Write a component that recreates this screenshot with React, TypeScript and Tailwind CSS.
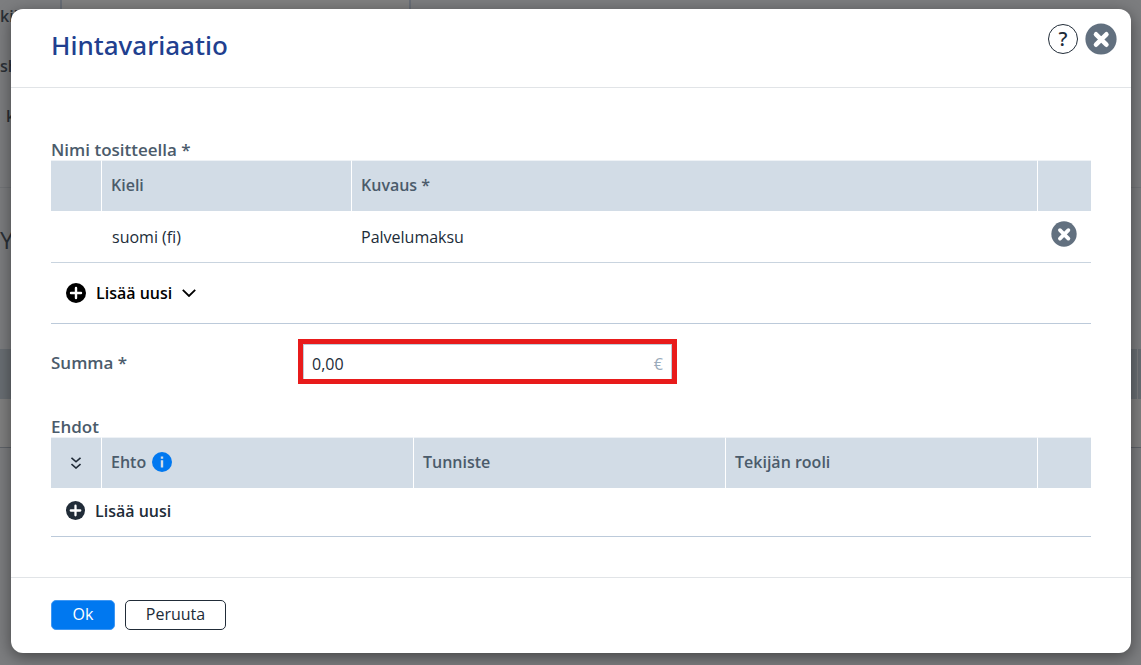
import React, { useState } from 'react';

const CloseIcon: React.FC<{ className?: string }> = ({ className }) => (
  <svg viewBox="0 0 32 32" className={className} aria-hidden="true">
    <circle cx="16" cy="16" r="15.6" fill="#62707f" />
    <path d="M11 11.3l10.4 10.4M21.4 11.3L11 21.7" stroke="#fff" strokeWidth="4.6" strokeLinecap="round" />
  </svg>
);

const PlusIcon: React.FC<{ className?: string }> = ({ className }) => (
  <svg viewBox="0 0 20 20" className={className} aria-hidden="true">
    <circle cx="10" cy="10" r="10" fill="currentColor" />
    <path d="M10 5v10M5 10h10" stroke="#fff" strokeWidth="2.4" strokeLinecap="round" />
  </svg>
);

const headCell = 'border-l border-t border-l-white border-t-[#eef2f6] pl-[9px] pb-[2px] text-left font-semibold';

const PageBehind: React.FC = () => (
  <div className="absolute inset-0 overflow-hidden bg-[#7c7d7f] font-semibold text-[#2b3036]" aria-hidden="true">
    <div className="flex h-[188px] border-b border-[#727477]">
      <div className="w-[62px] border-r-2 border-[#696e76] pt-1">
        <p className="h-[50px]">kil</p>
        <p className="h-[50px]">sh</p>
        <p className="pl-[6px]">k</p>
      </div>
      <div className="w-[349px] border-r-2 border-[#696e76] bg-[#808080]" />
    </div>
    <div className="h-[161px] pt-9 text-2xl font-normal">Y</div>
    <div className="flex h-[50px] justify-end bg-[#696e73]">
      <div className="w-1 border-l border-[#7c7d7f]" />
    </div>
    <div className="h-[49px] border-b border-[#5f6369] bg-[#808080]" />
  </div>
);

const App: React.FC = () => {
  const [amount, setAmount] = useState('0,00');

  return (
    <div className="relative min-h-screen font-['Open_Sans','Noto_Sans',sans-serif] text-base leading-6 text-[#212c38]">
      <PageBehind />

      <div className="relative pt-[9px] pr-[10px] pb-3 pl-[11px]">
        <div role="dialog" aria-labelledby="dialog-title" className="rounded-xl bg-white shadow-[0_4px_16px_rgba(0,0,0,0.45)]">
          <header className="flex h-[79px] items-start justify-between border-b border-[#e1e4e7] pl-10 pr-[14px] pt-[14px] font-['Noto_Sans',sans-serif]">
            <h1 id="dialog-title" className="pt-[2px] text-[26px] font-medium leading-10 text-[#213f8f]">Hintavariaatio</h1>
            <div className="flex items-center gap-[7px]">
              <button type="button" aria-label="Ohje" className="flex h-[30px] w-[30px] items-center justify-center rounded-full border border-[#212c38] text-xl font-medium">?</button>
              <button type="button" aria-label="Sulje">
                <CloseIcon className="h-8 w-8" />
              </button>
            </div>
          </header>

          <form id="variation-form" onSubmit={(e) => e.preventDefault()} className="px-10 pb-10 pt-12">
            <h2 id="names-title" className="h-6 pt-[2px] text-[17px] font-semibold leading-6 text-[#4b5b6b]">Nimi tositteella *</h2>
            <table aria-labelledby="names-title" className="w-full table-fixed border-separate border-spacing-0">
              <colgroup>
                <col className="w-[50px]" />
                <col className="w-[250px]" />
                <col />
                <col className="w-[54px]" />
              </colgroup>
              <thead>
                <tr className="h-[51px] bg-[#d2dce6] text-[#4b5b6b]">
                  <th className="border-t border-t-[#eef2f6]" />
                  <th className={headCell}>Kieli</th>
                  <th className={headCell}>Kuvaus *</th>
                  <th className={headCell} />
                </tr>
              </thead>
              <tbody>
                <tr className="h-[52px]">
                  <td className="border-b border-[#c9d4df]" />
                  <td className="border-b border-[#c9d4df] pl-[11px]">suomi (fi)</td>
                  <td className="border-b border-[#c9d4df] pl-[10px]">Palvelumaksu</td>
                  <td className="border-b border-[#c9d4df] pb-[5px] pl-[14px]">
                    <button type="button" aria-label="Poista rivi" className="block">
                      <CloseIcon className="h-[26px] w-[26px]" />
                    </button>
                  </td>
                </tr>
              </tbody>
            </table>
            <div className="flex h-[61px] items-center border-b border-[#bccada] pl-[15px]">
              <button type="button" className="flex items-center gap-[10px] font-semibold text-black">
                <PlusIcon className="h-5 w-5" />
                Lisää uusi
                <svg viewBox="0 0 14 8" className="h-2 w-[14px]" fill="none" stroke="currentColor" strokeWidth="1.8" aria-hidden="true">
                  <path d="M.8 .8L7 7 13.2 .8" />
                </svg>
              </button>
            </div>

            <div className="mt-[15px] flex items-center">
              <label htmlFor="amount" className="w-[247px] pt-[2px] text-[17px] font-semibold text-[#4b5b6b]">Summa *</label>
              <div className="flex h-[45px] w-[379px] items-center border-[5px] border-[#e81b1b]">
                <div className="flex h-full w-full items-center border border-b-0 border-[#c0ccd8] pl-2 pr-2 pt-1">
                  <input
                    id="amount"
                    type="text"
                    value={amount}
                    onChange={(e) => setAmount(e.target.value)}
                    className="min-w-0 flex-1 bg-transparent outline-none"
                  />
                  <span className="text-[#9aabbb]">€</span>
                </div>
              </div>
            </div>

            <h2 id="terms-title" className="mt-[29px] h-6 pt-[2px] text-[17px] font-semibold leading-6 text-[#4b5b6b]">Ehdot</h2>
            <table aria-labelledby="terms-title" className="w-full table-fixed border-separate border-spacing-0">
              <colgroup>
                <col className="w-[50px]" />
                <col />
                <col />
                <col />
                <col className="w-[54px]" />
              </colgroup>
              <thead>
                <tr className="h-[51px] bg-[#d2dce6] text-[#4b5b6b]">
                  <th className="border-t border-t-[#eef2f6]">
                    <button type="button" aria-label="Avaa kaikki" className="block w-full text-[#212c38]">
                      <svg viewBox="0 0 10 12" className="mx-auto h-3 w-[10px]" fill="none" stroke="currentColor" strokeWidth="1.6" aria-hidden="true">
                        <path d="M.5 .8L5 4.8 9.5 .8M.5 7L5 11 9.5 7" />
                      </svg>
                    </button>
                  </th>
                  <th className={headCell}>
                    <span className="flex items-center gap-[6px]">
                      Ehto
                      <svg viewBox="0 0 20 20" className="h-5 w-5" role="img" aria-label="Lisätietoja">
                        <circle cx="10" cy="10" r="10" fill="#0078f0" />
                        <path d="M8.8 8.2h2.4V15.4H8.8zM8.8 4.6h2.4v2.2H8.8z" fill="#d2dce6" />
                      </svg>
                    </span>
                  </th>
                  <th className={headCell}>Tunniste</th>
                  <th className={headCell}>Tekijän rooli</th>
                  <th className={headCell} />
                </tr>
              </thead>
            </table>
            <div className="flex h-[49px] items-center border-b border-[#bccada] pb-[3px] pl-[15px]">
              <button type="button" className="flex items-center gap-[10px] font-semibold">
                <PlusIcon className="h-[19px] w-[19px]" />
                Lisää uusi
              </button>
            </div>
          </form>

          <footer className="flex gap-[10px] border-t border-[#e1e4e7] px-10 pb-[23px] pt-[22px]">
            <button type="submit" form="variation-form" className="h-[30px] w-16 rounded-[5px] border border-[#3f97f3] bg-[#0078f0] pb-[2px] text-white">Ok</button>
            <button type="button" className="h-[30px] w-[101px] rounded-[5px] border border-[#212c38] pb-[2px]">Peruuta</button>
          </footer>
        </div>
      </div>
    </div>
  );
};

export default App;
